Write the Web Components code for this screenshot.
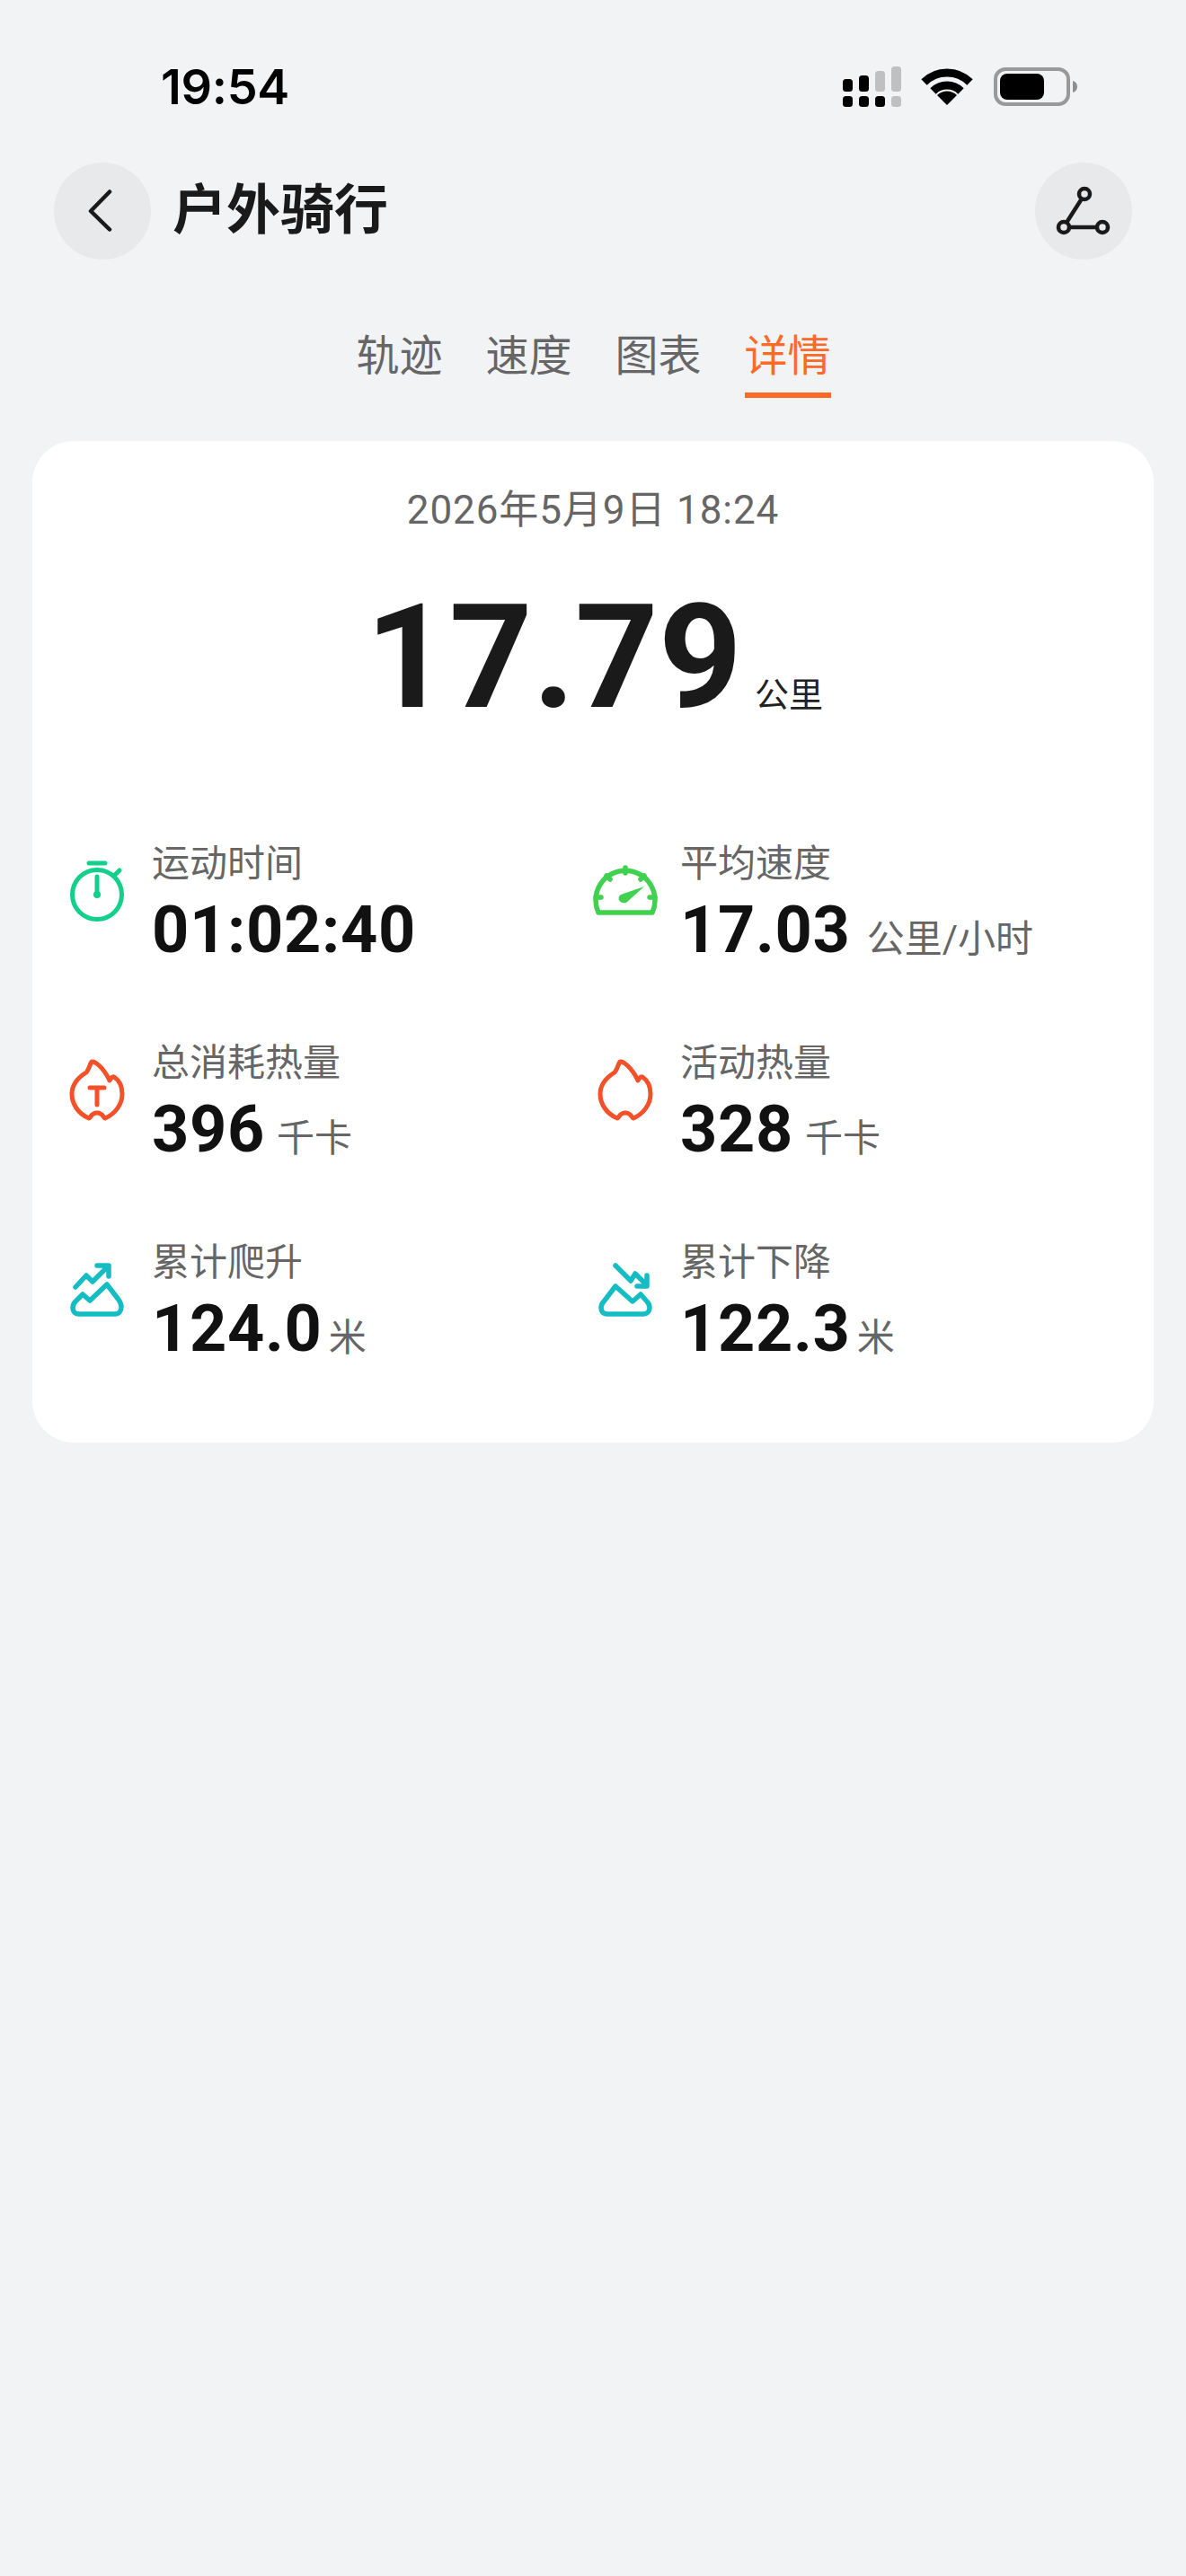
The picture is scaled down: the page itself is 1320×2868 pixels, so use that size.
<!doctype html>
<html lang="zh"><head><meta charset="utf-8"><title>户外骑行</title>
<style>
html,body{margin:0;padding:0;background:#f2f3f5}
body{width:1320px;height:2868px;overflow:hidden;font-family:"Roboto","Noto Sans CJK SC",sans-serif;display:flex;flex-direction:column}
</style></head><body>
<status-bar time="19:54"></status-bar>
<nav-bar heading="户外骑行"></nav-bar>
<tab-bar><tab-item>轨迹</tab-item><tab-item>速度</tab-item><tab-item>图表</tab-item><tab-item active>详情</tab-item></tab-bar>
<summary-card date="2026年5月9日 18:24" distance="17.79" unit="公里">
<metric-item icon="timer" label="运动时间" value="01:02:40"></metric-item>
<metric-item icon="gauge" label="平均速度" value="17.03" unit="公里/小时" gap="18"></metric-item>
<metric-item icon="flame-t" label="总消耗热量" value="396" unit="千卡" gap="13"></metric-item>
<metric-item icon="flame" label="活动热量" value="328" unit="千卡" gap="13"></metric-item>
<metric-item icon="up" label="累计爬升" value="124.0" unit="米" gap="7"></metric-item>
<metric-item icon="down" label="累计下降" value="122.3" unit="米" gap="7"></metric-item>
</summary-card>
<script>
const FONT='"Roboto","Noto Sans CJK SC",sans-serif';
function mk(name,render){customElements.define(name,class extends HTMLElement{connectedCallback(){if(!this.shadowRoot){this.attachShadow({mode:'open'}).innerHTML=render(this)}}})}
mk('status-bar',e=>`<style>
:host{display:flex;height:181px;flex:none;box-sizing:border-box;padding:66px 120px 0 179px;justify-content:space-between;align-items:flex-start}
.t{font:600 54px/62px "Inter",sans-serif;color:#000;letter-spacing:-.3px}
svg{display:block;margin-top:8px}
</style><span class="t">${e.getAttribute('time')}</span>
<svg width="262" height="46" viewBox="937 74 262 46">
<g fill="#000"><rect x="937" y="107" width="11" height="12" rx="3.500"/><rect x="955" y="107" width="11" height="12" rx="3.500"/><rect x="973" y="107" width="11" height="12" rx="3.500"/>
<rect x="937" y="88" width="11" height="14" rx="3.500"/><rect x="955" y="84" width="11" height="18" rx="3.500"/></g>
<g fill="#bfc0c2"><rect x="991" y="107" width="11" height="12" rx="3.500"/><rect x="973" y="79" width="11" height="23" rx="3.500"/><rect x="991" y="74" width="11" height="28" rx="3.500"/></g>
<g fill="none" stroke="#000" stroke-width="9"><path d="M1027.500 91.500a36 36 0 0 1 51 0"/><path d="M1037.500 101.500a22 22 0 0 1 31 0"/></g>
<path d="M1053 117l-11-11a15.500 15.500 0 0 1 22 0z" fill="#000"/>
<rect x="1107" y="77" width="81" height="39" rx="11" fill="none" stroke="#999" stroke-width="4"/>
<rect x="1112" y="82" width="49" height="29" rx="8" fill="#000"/>
<path d="M1193 90c3.500 1 5 3.500 5 6.500s-1.500 5.500-5 6.500z" fill="#8e8e8e"/>
</svg>`);
mk('nav-bar',e=>`<style>
:host{display:flex;flex:none;height:108px;padding:0 60px;align-items:center;gap:24px}
.c{width:108px;height:108px;border-radius:50%;background:#e8e9eb;flex:none;display:flex;align-items:center;justify-content:center}
h1{margin:0;flex:1;font:700 60px/108px ${FONT};color:#1a1a1a;letter-spacing:0}
</style><div class="c"><svg width="108" height="108" viewBox="0 0 108 108" fill="none" stroke="#1a1a1a" stroke-width="4.500" stroke-linecap="round" stroke-linejoin="round"><path d="M62 32.500L41 54 62 74.500"/></svg></div>
<h1>${e.getAttribute('heading')}</h1>
<div class="c"><svg width="108" height="108" viewBox="0 0 108 108" fill="none" stroke="#1a1a1a" stroke-width="4.500"><path d="M35.500 66L51.500 41M39 72H69"/><circle cx="55" cy="35" r="6"/><circle cx="32" cy="72" r="6"/><circle cx="75" cy="72" r="6"/></svg></div>`);
mk('tab-bar',()=>`<style>:host{display:flex;flex:none;justify-content:center;gap:48px;margin-top:80px;padding-left:1px}</style><slot></slot>`);
mk('tab-item',e=>`<style>
:host{display:block;font:400 48px/56px ${FONT};color:#666;padding-bottom:12px;border-bottom:6px solid transparent;width:96px;text-align:center;white-space:nowrap}
:host([active]){color:#ff6a26;border-bottom-color:#ff6a26}
</style><slot></slot>`);
mk('summary-card',e=>`<style>
:host{display:block;flex:none;box-sizing:border-box;margin:48px 36px 0;height:1115px;background:#fff;border-radius:46px;padding-top:47px}
.d{font:400 44px/60px ${FONT};color:#666;text-align:center;letter-spacing:.9px}
.b{display:flex;justify-content:center;align-items:baseline;margin-top:39px;height:190px;line-height:190px;padding-left:3px}
.n{font:700 162px/190px "Roboto",sans-serif;color:#1a1a1a}
.u{font:400 38px/190px ${FONT};color:#222;margin-left:14px}
.g{display:grid;grid-template-columns:588px 1fr;grid-auto-rows:222px;margin-top:105px;padding-left:36px}
</style><div class="d">${e.getAttribute('date')}</div>
<div class="b"><span class="n">${e.getAttribute('distance')}</span><span class="u">${e.getAttribute('unit')}</span></div>
<div class="g"><slot></slot></div>`);
const ICONS={
timer:`<g stroke="#12cf8c"><circle cx="0" cy="0" r="27.500"/><path d="M-9-35H9M0-20V0M19-21l6-6"/></g><circle r="4" fill="#12cf8c"/>`,
gauge:`<g stroke="#3fd14f" stroke-width="5.500"><path d="M-30 20A33 33 0 1 1 30 20Z"/><path d="M0-30v6M-21-21l4 4M21-21l-4 4M-33 3h6M33 3h-6"/></g><path d="M-5 0L21-9L1 9C-7 11-10 3-5 0Z" fill="#3fd14f"/>`,
flame:`<g stroke="#f4502a"><path d="M-6-34C-3-35 7-28 14-13C15-15 17-18 19-17C25-13 28-6 28 2C28 14 20 24 9 29C7 29 7 23 0 23C-7 23-7 29-9 29C-21 24-28 13-28 2C-28-10-20-17-12-22C-9-25-8-31-6-34Z"/></g>`,
up:`<g stroke="#14bdc3" stroke-width="5.500"><path d="M-20 16C-25 16-27 13-27 9C-27 6-26 4-24 2L-16-6L-8 1L11-17L24 0C26 3 27 5 27 8C27 13 24 16 20 16Z"/><path d="M-24-14L-12-27L-5-20L12-37M0-38H13V-26"/></g>`,
down:`<g stroke="#14bdc3" stroke-width="5.500"><path d="M-20 16C-25 16-27 13-27 9C-27 6-26 4-24 2L-11-15L8 2L17-6L24 2C26 4 27 6 27 9C27 13 24 16 20 16Z"/><path d="M-11-38L6-21L11-29L24-16M24-27V-15H13"/></g>`};
ICONS['flame-t']=ICONS.flame+`<path d="M-8-5H8M0-5V14" stroke="#f4502a"/>`;
mk('metric-item',e=>{const k=e.getAttribute('icon'),u=e.getAttribute('unit'),gap=e.getAttribute('gap')||14;const top={timer:24,gauge:24,'flame-t':22,flame:22,up:31,down:31}[k];
return `<style>
:host{display:flex;align-items:flex-start}
svg{flex:none;width:72px;height:80px;overflow:visible;margin-top:${top}px}
.t{margin-left:25px}
.l{font:400 42px/60px ${FONT};color:#666;display:block}
.v{display:flex;align-items:baseline;height:70px;line-height:70px;margin-top:9px}
.n{font:700 72px/70px "Roboto",sans-serif;color:#111;letter-spacing:.7px}
.u{font:400 42px/70px ${FONT};color:#666;margin-left:${gap}px}
</style><svg viewBox="-36 -40 72 80" fill="none" stroke-width="5" stroke-linecap="round" stroke-linejoin="round">${ICONS[k]}</svg>
<div class="t"><span class="l">${e.getAttribute('label')}</span><div class="v"><span class="n">${e.getAttribute('value')}</span>${u?`<span class="u">${u}</span>`:''}</div></div>`});
</script>
</body></html>
